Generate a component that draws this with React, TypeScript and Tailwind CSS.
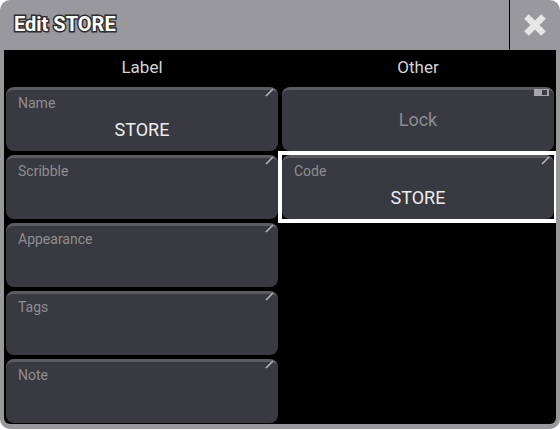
import React from 'react';

const font = { fontFamily: 'Roboto, "Liberation Sans", sans-serif' };

function Pencil() {
  return (
    <svg className="absolute right-[3px] top-[-3px]" width="11" height="11" viewBox="0 0 11 11">
      <line x1="2" y1="9" x2="9" y2="2" stroke="#b4b4b8" strokeWidth="1.6" />
    </svg>
  );
}

function Field({ label, value }: { label: string; value?: string }) {
  return (
    <div className="relative h-[64px] rounded-[8px] bg-[#393941] border-t-[3px] border-[#5b5b61] flex flex-col pl-[12px] pt-[5px]">
      <Pencil />
      <div className="text-[14px] leading-[16px] text-[#8e8e92]">{label}</div>
      {value && (
        <div className="mt-[9px] pr-[12px] text-center text-[18px] leading-[20px] text-[#ededed]">{value}</div>
      )}
    </div>
  );
}

function LockButton() {
  return (
    <div className="relative h-[64px] rounded-[8px] bg-[#393941] border-t-[3px] border-[#5b5b61] flex items-center justify-center">
      <div className="absolute right-[5px] top-[-1px] w-[15px] h-[7px] bg-[#a6a6aa]">
        <div className="absolute right-[2px] top-[1px] w-[5px] h-[5px] bg-[#3c3c44]" />
      </div>
      <span className="text-[18px] leading-[20px] text-[#8c8c90] -mt-[1px]">Lock</span>
    </div>
  );
}

export default function App() {
  return (
    <div className="w-[560px] h-[430px] bg-white" style={font}>
      <div className="h-[429px] flex flex-col bg-[#99999d] rounded-[10px] overflow-hidden">
        <div className="h-[50px] flex shrink-0">
          <div className="flex-1 flex items-center pl-[14px] pb-[3px]">
            <span className="text-[20px] font-bold text-white [-webkit-text-stroke:3px_#2e2e30] [paint-order:stroke_fill]">
              Edit STORE
            </span>
          </div>
          <div className="w-px bg-black" />
          <div className="w-[50px] flex items-center justify-center">
            <svg width="24" height="24" viewBox="0 0 24 24">
              <line x1="3.5" y1="3.5" x2="20.5" y2="20.5" stroke="#e6e6e6" strokeWidth="6.5" />
              <line x1="20.5" y1="3.5" x2="3.5" y2="20.5" stroke="#e6e6e6" strokeWidth="6.5" />
            </svg>
          </div>
        </div>
        <div className="flex-1 mx-[4px] mb-[5px] bg-black rounded-b-[6px] overflow-hidden">
          <div className="grid grid-cols-2 gap-x-[4px] gap-y-[4px] px-[2px]">
            <div className="h-[33px] pt-[2px] flex items-center justify-center text-[17px] text-[#d4d4d4]">Label</div>
            <div className="h-[33px] pt-[2px] flex items-center justify-center text-[17px] text-[#d4d4d4]">Other</div>
            <Field label="Name" value="STORE" />
            <LockButton />
            <Field label="Scribble" />
            <div className="outline-4 outline-white">
              <Field label="Code" value="STORE" />
            </div>
            <Field label="Appearance" />
            <div />
            <Field label="Tags" />
            <div />
            <Field label="Note" />
            <div />
          </div>
        </div>
      </div>
    </div>
  );
}
